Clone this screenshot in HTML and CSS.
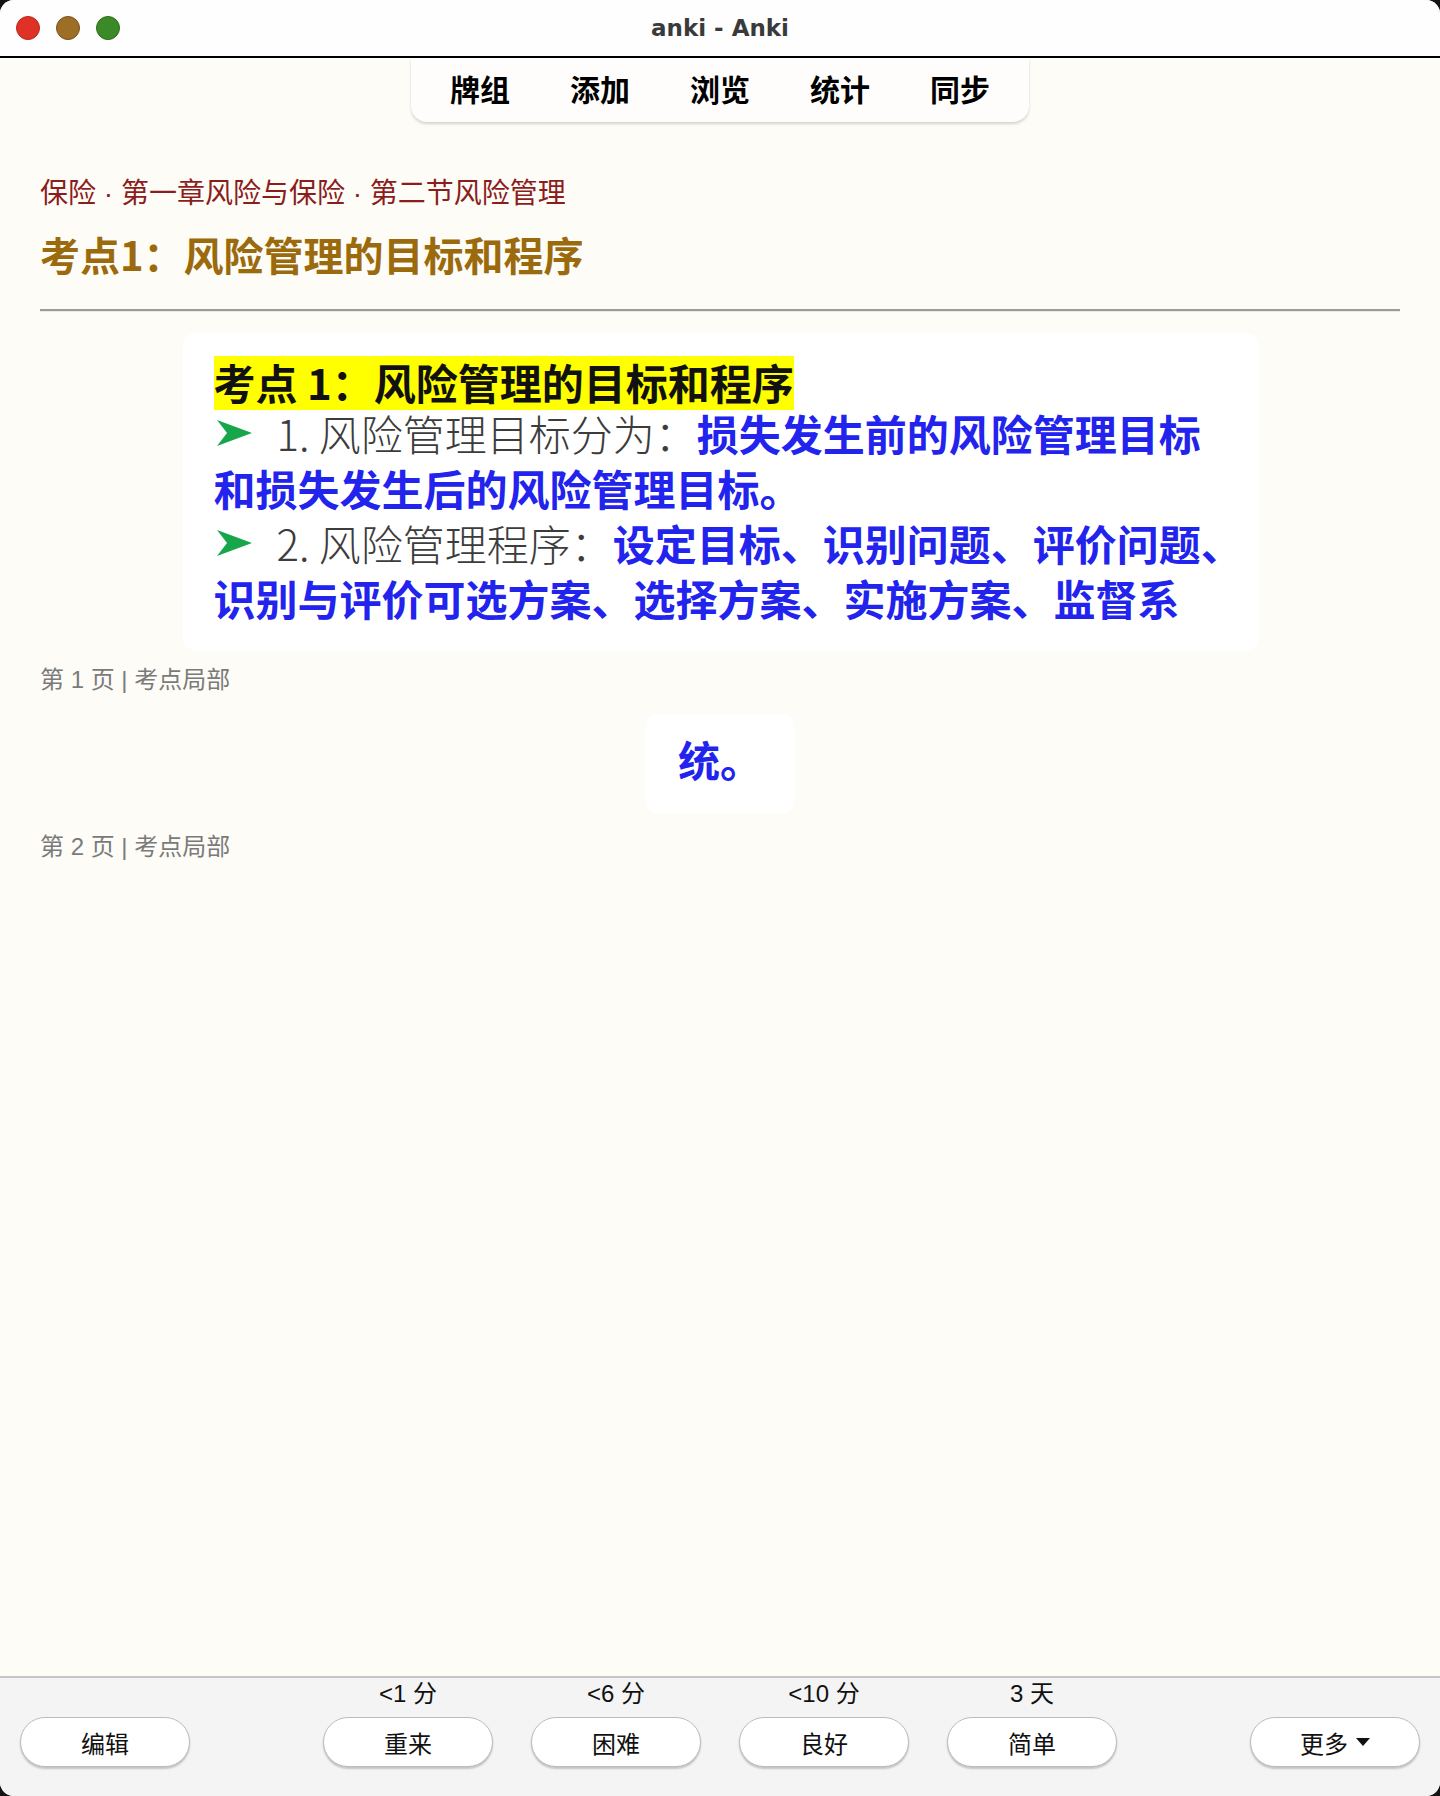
FILE: index.html
```html
<!DOCTYPE html>
<html lang="zh-CN">
<head>
<meta charset="utf-8">
<title>anki - Anki</title>
<link rel="stylesheet" href="styles.css">
</head>
<body>
<div class="window">
  <header class="titlebar">
    <div class="lights">
      <span class="light red"></span>
      <span class="light yellow"></span>
      <span class="light green"></span>
    </div>
    <div class="wintitle">anki - Anki</div>
    <div class="spacer"></div>
  </header>

  <main class="main">
    <nav class="toolbar-wrap">
      <div class="toolbar">
        <a class="tab">牌组</a>
        <a class="tab">添加</a>
        <a class="tab">浏览</a>
        <a class="tab">统计</a>
        <a class="tab">同步</a>
      </div>
    </nav>

    <section class="content">
      <div class="crumb">保险 · 第一章风险与保险 · 第二节风险管理</div>
      <h1 class="topic">考点1：风险管理的目标和程序</h1>
      <hr class="rule">

      <figure class="slide">
        <div class="slide-head"><span class="hl">考点 1：风险管理的目标和程序</span></div>
        <div class="slide-line">
          <svg class="arrow" viewBox="0 0 35 28" aria-hidden="true"><path d="M0 1 L35 14 L0 27 L10 14 Z" fill="#17a74a"/></svg><span class="plain">1. 风险管理目标分为：</span><span class="blue">损失发生前的风险管理目标</span>
        </div>
        <div class="slide-line"><span class="blue">和损失发生后的风险管理目标。</span></div>
        <div class="slide-line">
          <svg class="arrow" viewBox="0 0 35 28" aria-hidden="true"><path d="M0 1 L35 14 L0 27 L10 14 Z" fill="#17a74a"/></svg><span class="plain">2. 风险管理程序：</span><span class="blue">设定目标、识别问题、评价问题、</span>
        </div>
        <div class="slide-line"><span class="blue">识别与评价可选方案、选择方案、实施方案、监督系</span></div>
      </figure>
      <div class="caption">第 1 页 | 考点局部</div>

      <figure class="slide slide-small">
        <div class="slide-line slide-line-c"><span class="blue">统。</span></div>
      </figure>
      <div class="caption caption-2">第 2 页 | 考点局部</div>
    </section>
  </main>

  <footer class="bottombar">
    <div class="side left">
      <button class="btn">编辑</button>
    </div>
    <div class="answers">
      <div class="answer"><span class="due">&lt;1 分</span><button class="btn">重来</button></div>
      <div class="answer"><span class="due">&lt;6 分</span><button class="btn">困难</button></div>
      <div class="answer"><span class="due">&lt;10 分</span><button class="btn">良好</button></div>
      <div class="answer"><span class="due">3 天</span><button class="btn">简单</button></div>
    </div>
    <div class="side right">
      <button class="btn">更多<svg class="caret" viewBox="0 0 14 8" aria-hidden="true"><path d="M0 0 H14 L7 8 Z" fill="#111"/></svg></button>
    </div>
  </footer>
</div>
</body>
</html>
```

FILE: styles.css
```css
html, body {
  margin: 0;
  padding: 0;
}

body {
  background: #141414;
  font-family: "Noto Sans CJK SC", "Noto Sans", sans-serif;
}

.window {
  width: 1440px;
  height: 1796px;
  border-radius: 14px;
  overflow: hidden;
  background: #fdfcf7;
  display: flex;
  flex-direction: column;
}

/* ---------- title bar ---------- */
.titlebar {
  height: 56px;
  flex: none;
  background: #fefefe;
  border-bottom: 2px solid #000;
  display: grid;
  grid-template-columns: 1fr auto 1fr;
  align-items: center;
}

.lights {
  display: flex;
  gap: 16px;
  padding-left: 16px;
}

.light {
  width: 24px;
  height: 24px;
  box-sizing: border-box;
  border-radius: 50%;
  display: block;
}

.light.red { background: #df3126; border: 1px solid #b8271d; }
.light.yellow { background: #9c6e26; border: 1px solid #7a5218; }
.light.green { background: #3b8a27; border: 1px solid #2b6a1b; }

.wintitle {
  font-family: "DejaVu Sans", "Liberation Sans", sans-serif;
  font-weight: bold;
  font-size: 23px;
  color: #3a3a3a;
}

/* ---------- main ---------- */
.main {
  flex: 1;
  display: flex;
  flex-direction: column;
}

.toolbar-wrap {
  display: flex;
  justify-content: center;
}

.toolbar {
  display: flex;
  align-items: center;
  gap: 60px;
  height: 60px;
  padding: 0 39px 4px;
  background: #fefdfb;
  border-radius: 0 0 16px 16px;
  box-shadow: 0 2px 3px rgba(0, 0, 0, 0.16);
}

.tab {
  font-size: 30px;
  font-weight: bold;
  color: #000;
  line-height: 1;
  text-decoration: none;
}

.content {
  padding: 0 40px;
  display: flex;
  flex-direction: column;
}

.crumb {
  margin-top: 52px;
  font-family: "Liberation Sans", "Noto Sans CJK SC", sans-serif;
  font-size: 28px;
  line-height: 40px;
  color: #8b1d1d;
}

.topic {
  margin: 12px 0 0;
  font-size: 40px;
  line-height: 56px;
  font-weight: bold;
  color: #9b6a0c;
}

.rule {
  margin: 27px 0 0;
  height: 0;
  border: 0;
  border-top: 2px solid #9c9c9c;
  border-bottom: 1px solid #e8e8e4;
}

/* ---------- slide images ---------- */
.slide {
  margin: 22px auto 0;
  width: 1075px;
  box-sizing: border-box;
  padding: 22px 20px 20px 31px;
  background: #fff;
  border-radius: 10px;
}

.slide-head {
  height: 54px;
  display: flex;
  font-size: 42px;
  white-space: nowrap;
}

.hl {
  display: inline-block;
  height: 54px;
  line-height: 51px;
  background: #ffff00;
  color: #111;
  font-weight: bold;
}

.slide-line {
  height: 55px;
  display: flex;
  align-items: flex-start;
  white-space: nowrap;
  font-size: 42px;
  line-height: 45px;
}

.slide-line-c {
  align-items: center;
  justify-content: center;
}

.arrow {
  width: 35px;
  height: 28px;
  margin: 9px 25px 0 3px;
  flex: none;
}

.plain {
  color: #3c3c3c;
  font-weight: 300;
  line-height: 45px;
}

.blue {
  color: #2323ee;
  font-weight: bold;
  line-height: 45px;
}

.slide-small {
  width: 148px;
  margin-top: 18px;
  padding: 17px 0 27px;
}

.caption {
  margin-top: 14px;
  font-family: "Liberation Sans", "Noto Sans CJK SC", sans-serif;
  font-size: 24px;
  line-height: 32px;
  color: #7a7a7a;
}

.caption-2 {
  margin-top: 18px;
}

/* ---------- bottom bar ---------- */
.bottombar {
  flex: none;
  height: 120px;
  box-sizing: border-box;
  background: #f4f4f4;
  border-top: 2px solid #c6c6c6;
  display: grid;
  grid-template-columns: 1fr auto 1fr;
  align-items: end;
  padding: 2px 20px 29px;
}

.side {
  display: flex;
}

.side.right {
  justify-content: flex-end;
}

.answers {
  display: flex;
  gap: 38px;
}

.answer {
  display: flex;
  flex-direction: column;
  align-items: center;
  gap: 9px;
}

.due {
  font-family: "Liberation Sans", "Noto Sans CJK SC", sans-serif;
  font-size: 24px;
  line-height: 28px;
  color: #111;
}

.btn {
  width: 170px;
  height: 50px;
  box-sizing: border-box;
  border: 1px solid #bcbcbc;
  border-radius: 25px;
  background: #fff;
  box-shadow: 0 2px 2px rgba(0, 0, 0, 0.2);
  font-family: "Noto Sans CJK SC", sans-serif;
  font-size: 24px;
  color: #111;
  display: flex;
  align-items: center;
  justify-content: center;
  padding: 0;
}

.caret {
  width: 14px;
  height: 8px;
  margin-left: 8px;
}
```
